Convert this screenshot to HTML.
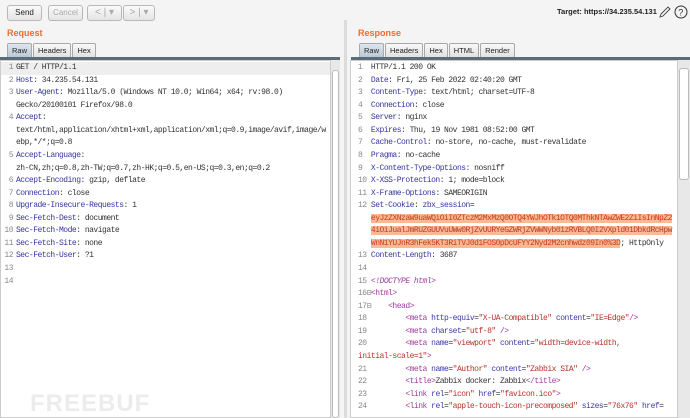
<!DOCTYPE html>
<html><head><style>
body{margin:0;width:690px;height:418px;background:#f4f4f4;position:relative;overflow:hidden;font-family:"Liberation Sans",sans-serif}
.btn{position:absolute;top:5px;height:14px;border:1px solid #b8b8b8;border-radius:3px;background:linear-gradient(#fafafa,#e4e4e4);font-size:8px;line-height:14px;text-align:center;color:#222}
.dis{color:#aaa}
.title{position:absolute;top:28px;font-size:9px;font-weight:bold;color:#f26b2a}
.tabs{position:absolute;top:43px;height:14px;display:flex}
.tab{border:1px solid #a8a8a8;border-bottom:none;background:linear-gradient(#f8f8f8,#e2e2e2);font-size:7.5px;line-height:14px;padding:0 4px;margin-right:1px;color:#222;border-radius:2px 2px 0 0}
.tab.on{background:linear-gradient(#dde6ee,#b8c8d6)}
.line{position:absolute;height:3px;background:#5a6b7a}
.ed{position:absolute;top:60px;bottom:0;background:#fff;border:1px solid #ccc;overflow:hidden}
.code{position:absolute;top:1px;font-family:"Liberation Mono",monospace;font-size:8px;letter-spacing:-0.5px;line-height:12.56px;white-space:pre;color:#333}
.n{color:#888;display:inline-block}
.L .n{width:9px;text-align:right;margin-left:-3px;margin-right:3px}
.k{color:#3535a0}
.hl{background:#f9b993;color:#c83a1a}
.t{color:#a03c9c}.a{color:#3a3aa8}.v{color:#b8322a}
.sb{position:absolute;top:60px;bottom:0;width:9px;background:#e8e8e8;border-left:1px solid #ccc}
.thumb{position:absolute;left:1px;right:1px;background:#fff;border:1px solid #bbb;border-radius:3px}
</style></head><body>
<div class="btn" style="left:7px;width:33px">Send</div>
<div class="btn dis" style="left:48px;width:33px">Cancel</div>
<div class="btn dis" style="left:87px;width:33px;font-size:10px">&lt; | ▾</div>
<div class="btn dis" style="left:123px;width:30px;font-size:10px">&gt; | ▾</div>
<div style="position:absolute;left:557px;top:7px;font-size:7.5px;font-weight:bold;color:#222">Target: https://34.235.54.131</div>
<svg style="position:absolute;left:658px;top:5px" width="30" height="14"><path d="M2 12 L3 9 L10 2 L12 4 L5 11 Z" fill="none" stroke="#444" stroke-width="0.9"/><circle cx="23" cy="7" r="6" fill="none" stroke="#333" stroke-width="1"/><text x="20.3" y="10.5" font-size="9" font-family="Liberation Sans" fill="#333">?</text></svg>
<div class="title" style="left:7px">Request</div>
<div class="title" style="left:358px">Response</div>
<div class="tabs" style="left:7px"><div class="tab on">Raw</div><div class="tab">Headers</div><div class="tab">Hex</div></div>
<div class="tabs" style="left:359px"><div class="tab on">Raw</div><div class="tab">Headers</div><div class="tab">Hex</div><div class="tab">HTML</div><div class="tab">Render</div></div>
<div class="line" style="left:0;width:340px;top:57px"></div>
<div class="line" style="left:351px;width:339px;top:57px"></div>
<div style="position:absolute;left:344px;top:20px;bottom:0;width:3px;background:#dcdcdc"></div>
<div class="ed" style="left:0;width:330px"><div style="position:absolute;left:0;right:0;top:1px;height:12.5px;background:#eee"></div><div class="code L" style="left:6px"><span class="n">1</span>GET / HTTP/1.1
<span class="n">2</span><span class="k">Host</span>: 34.235.54.131
<span class="n">3</span><span class="k">User-Agent</span>: Mozilla/5.0 (Windows NT 10.0; Win64; x64; rv:98.0)
<span class="n"></span>Gecko/20100101 Firefox/98.0
<span class="n">4</span><span class="k">Accept</span>:
<span class="n"></span>text/html,application/xhtml+xml,application/xml;q=0.9,image/avif,image/w
<span class="n"></span>ebp,*/*;q=0.8
<span class="n">5</span><span class="k">Accept-Language</span>:
<span class="n"></span>zh-CN,zh;q=0.8,zh-TW;q=0.7,zh-HK;q=0.5,en-US;q=0.3,en;q=0.2
<span class="n">6</span><span class="k">Accept-Encoding</span>: gzip, deflate
<span class="n">7</span><span class="k">Connection</span>: close
<span class="n">8</span><span class="k">Upgrade-Insecure-Requests</span>: 1
<span class="n">9</span><span class="k">Sec-Fetch-Dest</span>: document
<span class="n">10</span><span class="k">Sec-Fetch-Mode</span>: navigate
<span class="n">11</span><span class="k">Sec-Fetch-Site</span>: none
<span class="n">12</span><span class="k">Sec-Fetch-User</span>: ?1
<span class="n">13</span>
<span class="n">14</span></div></div>
<div class="sb" style="left:330px"><div class="thumb" style="top:10px;bottom:0"></div></div>
<div class="ed" style="left:350px;width:327px"><div class="code" style="left:7px"><span class="n">1</span>  HTTP/1.1 200 OK
<span class="n">2</span>  <span class="k">Date</span>: Fri, 25 Feb 2022 02:40:20 GMT
<span class="n">3</span>  <span class="k">Content-Type</span>: text/html; charset=UTF-8
<span class="n">4</span>  <span class="k">Connection</span>: close
<span class="n">5</span>  <span class="k">Server</span>: nginx
<span class="n">6</span>  <span class="k">Expires</span>: Thu, 19 Nov 1981 08:52:00 GMT
<span class="n">7</span>  <span class="k">Cache-Control</span>: no-store, no-cache, must-revalidate
<span class="n">8</span>  <span class="k">Pragma</span>: no-cache
<span class="n">9</span>  <span class="k">X-Content-Type-Options</span>: nosniff
<span class="n">10</span> <span class="k">X-XSS-Protection</span>: 1; mode=block
<span class="n">11</span> <span class="k">X-Frame-Options</span>: SAMEORIGIN
<span class="n">12</span> <span class="k">Set-Cookie</span>: <span class="k">zbx_session</span>=
   <span class="hl">eyJzZXNzaW9uaWQiOiI0ZTczM2MxMzQ0OTQ4YWJhOTk1OTQ0MThkNTAwZWE2ZiIsInNpZ2</span>
   <span class="hl">4iOiJualJmRUZGUUVuUWw0RjZvUURYeGZWRjZVWWNyb01zRVBLQ0I2VXpld01DbkdRcHpw</span>
   <span class="hl">WnN1YUJnR3hFek5KT3RiTVJ0d1FOS0pDcUFYY2Nyd2M2cnhwdz09In0%3D</span>; HttpOnly
<span class="n">13</span> <span class="k">Content-Length</span>: 3687
<span class="n">14</span>
<span class="n">15</span> <i class="t">&lt;!DOCTYPE html&gt;</i>
<span class="n">16⊟</span><span class="t">&lt;html&gt;</span>
<span class="n">17⊟</span>    <span class="t">&lt;head&gt;</span>
<span class="n">18</span>         <span class="t">&lt;meta</span> <span class="a">http-equiv</span>=<span class="v">"X-UA-Compatible"</span> <span class="a">content</span>=<span class="v">"IE=Edge"</span><span class="t">/&gt;</span>
<span class="n">19</span>         <span class="t">&lt;meta</span> <span class="a">charset</span>=<span class="v">"utf-8"</span> <span class="t">/&gt;</span>
<span class="n">20</span>         <span class="t">&lt;meta</span> <span class="a">name</span>=<span class="v">"viewport"</span> <span class="a">content</span>=<span class="v">"width=device-width,</span>
<span class="v">initial-scale=1"</span><span class="t">&gt;</span>
<span class="n">21</span>         <span class="t">&lt;meta</span> <span class="a">name</span>=<span class="v">"Author"</span> <span class="a">content</span>=<span class="v">"Zabbix SIA"</span> <span class="t">/&gt;</span>
<span class="n">22</span>         <span class="t">&lt;title&gt;</span>Zabbix docker: Zabbix<span class="t">&lt;/title&gt;</span>
<span class="n">23</span>         <span class="t">&lt;link</span> <span class="a">rel</span>=<span class="v">"icon"</span> <span class="a">href</span>=<span class="v">"favicon.ico"</span><span class="t">&gt;</span>
<span class="n">24</span>         <span class="t">&lt;link</span> <span class="a">rel</span>=<span class="v">"apple-touch-icon-precomposed"</span> <span class="a">sizes</span>=<span class="v">"76x76"</span> <span class="a">href</span>=</div></div>
<div class="sb" style="left:677px;width:12px"><div class="thumb" style="top:8px;height:110px"></div></div>
<div style="position:absolute;left:30px;top:390px;font-size:24px;font-weight:bold;color:rgba(200,200,200,0.35);letter-spacing:1px">FREEBUF</div>
</body></html>
